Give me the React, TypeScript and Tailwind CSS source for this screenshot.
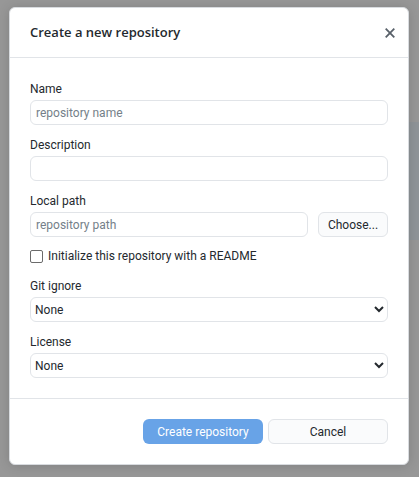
import type { ReactNode } from "react";

const control =
  "h-[25px] w-full min-w-0 rounded-md border border-[#e1e4e8] bg-white text-[#24292e] outline-none placeholder:text-[#757f89]";

function Field({ id, label, children }: { id: string; label: string; children: ReactNode }) {
  return (
    <div className="flex flex-col">
      <label htmlFor={id} className="leading-[22px]">
        {label}
      </label>
      {children}
    </div>
  );
}

function SelectField({ id, label }: { id: string; label: string }) {
  return (
    <Field id={id} label={label}>
      <div className="relative">
        <select id={id} className={control + " block appearance-none pt-px pr-6 pl-1"}>
          <option>None</option>
        </select>
        <svg
          viewBox="0 0 10 8"
          className="pointer-events-none absolute top-2 right-1 h-2 w-[10px]"
          fill="none"
          stroke="#24292e"
          strokeWidth="2"
          aria-hidden="true"
        >
          <path d="M1 2l4 4 4-4" />
        </svg>
      </div>
    </Field>
  );
}

export default function App() {
  return (
    <div className="relative min-h-screen overflow-hidden bg-[#979797] pt-[7px] pr-[10px] pb-3 pl-[9px] font-['Roboto','Noto_Sans',sans-serif] text-xs text-[#24292e]">
      <div className="absolute top-[122px] right-0 h-[118px] w-4 bg-[#8f9498]" />
      <div
        role="dialog"
        aria-labelledby="title"
        className="relative mx-auto max-w-[400px] rounded-md border border-[#d8dbdf] bg-white shadow-[0_1px_12px_rgba(0,0,0,0.15)]"
      >
        <header className="flex h-[50px] items-center justify-between border-b border-[#e1e4e8] pr-[13px] pl-5">
          <h1 id="title" className="font-['Open_Sans','Noto_Sans',sans-serif] text-[13px] font-semibold">
            Create a new repository
          </h1>
          <button type="button" aria-label="Close" className="text-[#586069]">
            <svg viewBox="0 0 10 10" className="size-[10px]" fill="none" stroke="currentColor" strokeWidth="1.8">
              <path d="M0.7 0.7l8.6 8.6M9.3 0.7L0.7 9.3" />
            </svg>
          </button>
        </header>

        <form className="flex flex-col gap-[9px] p-5">
          <Field id="name" label="Name">
            <input id="name" type="text" placeholder="repository name" className={control + " px-[5px] pt-px"} />
          </Field>
          <Field id="description" label="Description">
            <input id="description" type="text" className={control + " px-[5px] pt-px"} />
          </Field>
          <Field id="path" label="Local path">
            <div className="flex gap-[10px]">
              <input id="path" type="text" placeholder="repository path" className={control + " px-[5px] pt-px"} />
              <button
                type="button"
                className="h-[25px] w-[70px] shrink-0 rounded-md border border-[#e1e4e8] bg-[#fafbfc] pt-px"
              >
                Choose...
              </button>
            </div>
          </Field>
          <label className="flex h-5 items-center gap-[5px]">
            <input
              type="checkbox"
              className="size-[13px] appearance-none rounded-[2px] border border-[#6b6b6b] bg-white checked:bg-[#0366d6]"
            />
            Initialize this repository with a README
          </label>
          <SelectField id="ignore" label="Git ignore" />
          <SelectField id="license" label="License" />
        </form>

        <footer className="flex justify-end gap-[5px] border-t border-[#e1e4e8] p-5">
          <button type="button" className="h-[25px] w-[120px] rounded-md bg-[#68a3e7] pt-px text-white">
            Create repository
          </button>
          <button type="button" className="h-[25px] w-[120px] rounded-md border border-[#e1e4e8] bg-[#fafbfc] pt-px">
            Cancel
          </button>
        </footer>
      </div>
    </div>
  );
}
